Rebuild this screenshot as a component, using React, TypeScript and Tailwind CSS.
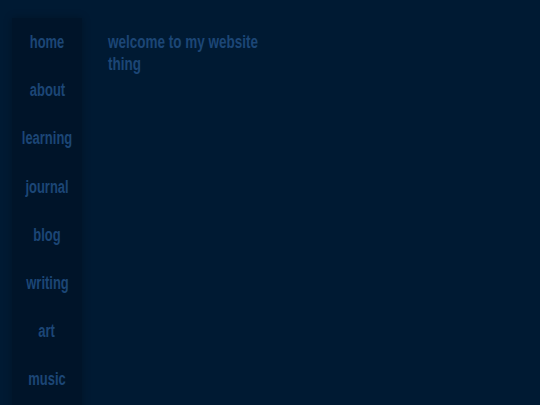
const links = ["home", "about", "learning", "journal", "blog", "writing", "art", "music"];

export default function App() {
  return (
    <div
      className="flex min-h-[405px] gap-[26px] bg-[#001a33] pl-3 pt-[18px]"
      style={{ fontFamily: '"Liberation Sans", Arial, sans-serif' }}
    >
      {/* Sidebar */}
      <nav className="flex w-[70px] shrink-0 flex-col items-center bg-[#001429] pt-[14px] shadow-[0_0_8px_rgba(0,0,0,0.25)]">
        {links.map((l) => (
          <a
            key={l}
            href="#"
            className="inline-block h-[48.2px] scale-x-[0.72] text-[18px] font-bold leading-[20px] text-[#1c4676]"
          >
            {l}
          </a>
        ))}
      </nav>
      {/* Content */}
      <main className="w-[240px] origin-left scale-x-[0.71] pt-[13px] text-[19px] font-bold leading-[22px] text-[#1c4676]">
        welcome to my website thing
      </main>
    </div>
  );
}
